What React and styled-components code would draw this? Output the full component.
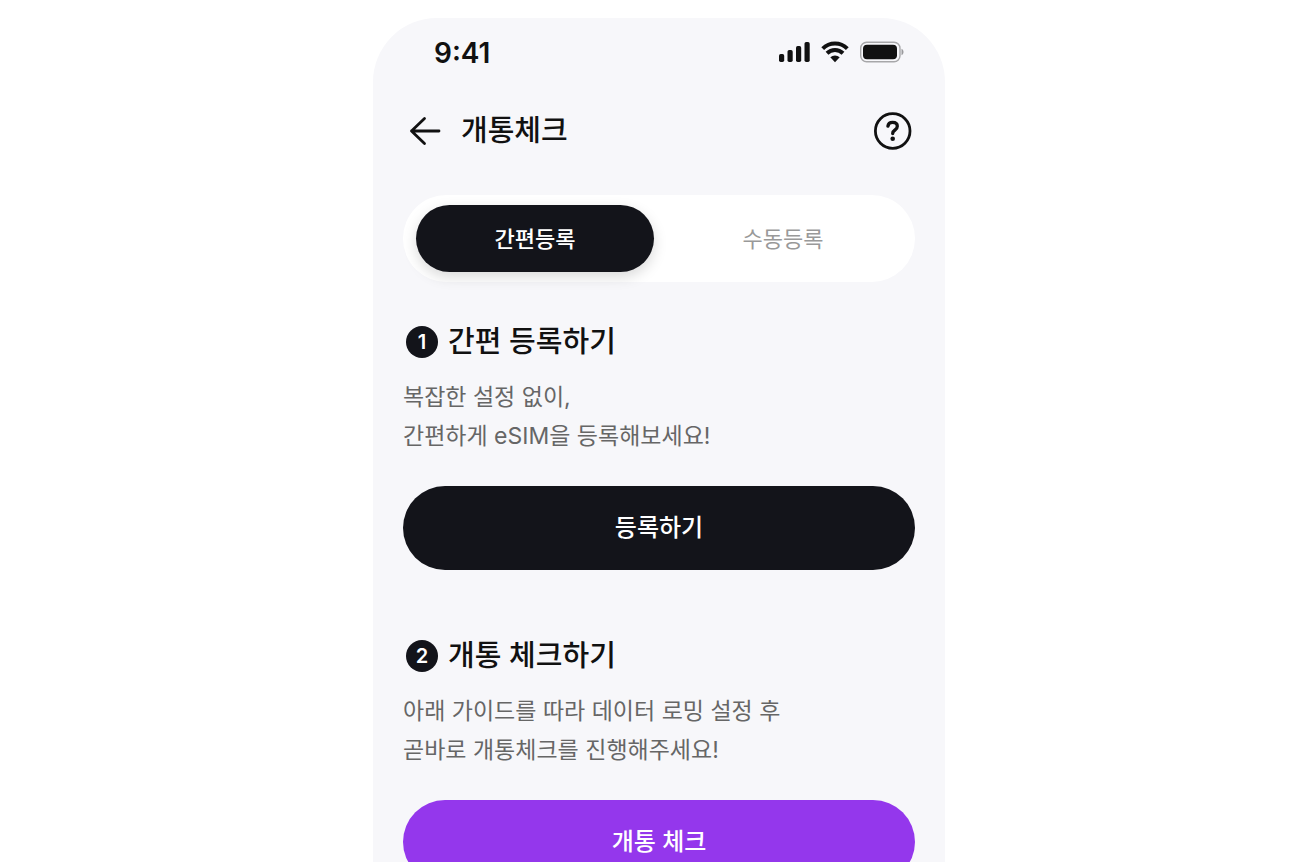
import React, { useState } from 'react';
import styled, { createGlobalStyle, ThemeProvider } from 'styled-components';

const theme = {
    colors: {
        page: '#ffffff',
        screen: '#f7f7fa',
        ink: '#111111',
        dark: '#13141a',
        text: '#666666',
        muted: '#999999',
        purple: '#9437ec',
    },
};

const GlobalStyle = createGlobalStyle`
    html {
        scrollbar-width: none;
    }

    body {
        margin: 0;
        background: ${(props) => props.theme.colors.page};
        color: ${(props) => props.theme.colors.ink};
        font-family: Inter, 'Noto Sans CJK KR', sans-serif;
    }

    *, *::before, *::after {
        box-sizing: border-box;
    }

    button {
        border: 0;
        padding: 0;
        font: inherit;
        cursor: pointer;
    }
`;

const Page = styled.div`
    display: flex;
    justify-content: center;
    padding: 18px 0 0 2px;
`;

const Phone = styled.main`
    width: 100%;
    max-width: 572px;
    padding: 0 30px 60px;
    border-radius: 64px 64px 0 0;
    background: ${(props) => props.theme.colors.screen};
`;

const StatusBar = styled.div`
    display: flex;
    align-items: center;
    justify-content: space-between;
    height: 70px;
    padding: 0 11px 0 31px;
`;

const Time = styled.span`
    font-size: 28px;
    font-weight: 600;
    line-height: 32px;
`;

const StatusIcons = styled.div`
    display: flex;
    align-items: center;
    gap: 11px;
    padding-bottom: 2px;
`;

const Header = styled.header`
    display: flex;
    align-items: center;
    gap: 16px;
    height: 50px;
    margin: 18px 0 39px;
    padding: 0 3px 0 4px;
`;

const IconButton = styled.button`
    display: flex;
    background: none;
    color: ${(props) => props.theme.colors.ink};
`;

const PageTitle = styled.h1`
    flex: 1;
    margin: 0;
    font-size: 29px;
    font-weight: 500;
    line-height: 40px;
`;

const Tabs = styled.div`
    display: grid;
    grid-template-columns: 1fr 1fr;
    gap: 10px;
    padding: 10px 13px;
    border-radius: 44px;
    background: white;
`;

const Tab = styled.button`
    height: 67px;
    border-radius: 34px;
    background: ${(props) => (props.$active ? props.theme.colors.dark : 'transparent')};
    color: ${(props) => (props.$active ? 'white' : props.theme.colors.muted)};
    box-shadow: ${(props) => (props.$active ? '0 5px 14px rgba(0, 0, 0, 0.15)' : 'none')};
    font-size: 22px;
    font-weight: ${(props) => (props.$active ? 500 : 400)};
    line-height: 32px;
`;

const StyledStep = styled.section`
    margin-top: ${(props) => (props.$first ? 40 : 66)}px;
`;

const StepTitle = styled.h2`
    display: flex;
    align-items: center;
    gap: 10px;
    margin: 0 0 16px;
    padding-left: 3px;
    font-size: 29px;
    font-weight: 500;
    line-height: 40px;
`;

const StepNumber = styled.span`
    display: flex;
    align-items: center;
    justify-content: center;
    width: 32px;
    height: 32px;
    border-radius: 50%;
    background: ${(props) => props.theme.colors.dark};
    color: white;
    font-size: 20px;
    font-weight: 600;
    line-height: 32px;
`;

const Description = styled.p`
    margin: 0 0 30px;
    color: ${(props) => props.theme.colors.text};
    font-size: 23px;
    line-height: 39px;
`;

const ActionButton = styled.button`
    display: block;
    width: 100%;
    height: 84px;
    border-radius: 42px;
    background: ${(props) => props.theme.colors[props.$color]};
    color: white;
    font-size: 24px;
    font-weight: 500;
    line-height: 32px;
`;

const SignalIcon = () => (
    <svg width="31" height="22" viewBox="0 0 31 22" fill="#111" aria-hidden="true">
        <rect x="0" y="13" width="5.2" height="8" rx="1.7" />
        <rect x="8.5" y="9" width="5.2" height="12" rx="1.7" />
        <rect x="17" y="5" width="5.2" height="16" rx="1.7" />
        <rect x="25.5" y="1" width="5.2" height="20" rx="1.7" />
    </svg>
);

const WifiIcon = () => (
    <svg width="28" height="22" viewBox="0 0 28 22" aria-hidden="true">
        <path d="M1.7 7.6a17.6 17.6 0 0 1 24.6 0" fill="none" stroke="#111" strokeWidth="4" />
        <path d="M6 12.300a11.500 11.500 0 0 1 16 0" fill="none" stroke="#111" strokeWidth="4" />
        <path d="M14 21.200l-4.700-4.900a7 7 0 0 1 9.400 0z" fill="#111" />
    </svg>
);

const BatteryIcon = () => (
    <svg width="44" height="22" viewBox="0 0 44 22" aria-hidden="true">
        <rect x="0.7" y="1.2" width="39.3" height="19.6" rx="6" fill="none" stroke="#111" strokeOpacity="0.35" strokeWidth="1.4" />
        <rect x="3" y="3.7" width="34" height="14.6" rx="4" fill="#111" />
        <path d="M41.5 7.8c1.2.5 2 1.8 2 3.2s-.8 2.7-2 3.2z" fill="#111" fillOpacity="0.4" />
    </svg>
);

const BackIcon = () => (
    <svg width="38" height="38" viewBox="0 0 38 38" fill="none" stroke="currentColor" strokeWidth="2.8" strokeLinecap="round" strokeLinejoin="round" aria-hidden="true">
        <path d="M32 19H4.500M17.500 6.500L4.500 19l13 12.500" />
    </svg>
);

const HelpIcon = () => (
    <svg width="38" height="38" viewBox="0 0 38 38" fill="none" stroke="currentColor" aria-hidden="true">
        <circle cx="18.700" cy="19" r="17.300" strokeWidth="2.800" />
        <path d="M13.900 14.200c.3-2.400 2-3.800 4.700-3.800 2.800 0 4.700 1.500 4.700 3.900 0 1.800-.9 2.800-2.300 3.700-1.500 1-2.300 1.800-2.300 3.500" strokeWidth="3.300" strokeLinecap="round" />
        <circle cx="18.700" cy="26.700" r="2.300" fill="currentColor" stroke="none" />
    </svg>
);

const steps = [
    {
        title: '간편 등록하기',
        lines: ['복잡한 설정 없이,', '간편하게 eSIM을 등록해보세요!'],
        action: '등록하기',
        color: 'dark',
    },
    {
        title: '개통 체크하기',
        lines: ['아래 가이드를 따라 데이터 로밍 설정 후', '곧바로 개통체크를 진행해주세요!'],
        action: '개통 체크',
        color: 'purple',
    },
];

const tabs = ['간편등록', '수동등록'];

const Step = ({ step, number }) => {
    return (
        <StyledStep $first={number === 1}>
            <StepTitle>
                <StepNumber>{number}</StepNumber>
                {step.title}
            </StepTitle>
            <Description>
                {step.lines[0]}
                <br />
                {step.lines[1]}
            </Description>
            <ActionButton type="button" $color={step.color}>
                {step.action}
            </ActionButton>
        </StyledStep>
    );
};

const App = () => {
    const [activeTab, setActiveTab] = useState(0);

    return (
        <ThemeProvider theme={theme}>
            <GlobalStyle />
            <Page>
                <Phone lang="ko">
                    <StatusBar>
                        <Time>9:41</Time>
                        <StatusIcons>
                            <SignalIcon />
                            <WifiIcon />
                            <BatteryIcon />
                        </StatusIcons>
                    </StatusBar>
                    <Header>
                        <IconButton type="button" aria-label="뒤로">
                            <BackIcon />
                        </IconButton>
                        <PageTitle>개통체크</PageTitle>
                        <IconButton type="button" aria-label="도움말">
                            <HelpIcon />
                        </IconButton>
                    </Header>
                    <Tabs role="tablist">
                        {tabs.map((label, index) => (
                            <Tab
                                key={label}
                                type="button"
                                role="tab"
                                aria-selected={activeTab === index}
                                $active={activeTab === index}
                                onClick={() => setActiveTab(index)}
                            >
                                {label}
                            </Tab>
                        ))}
                    </Tabs>
                    {steps.map((step, index) => (
                        <Step key={step.title} step={step} number={index + 1} />
                    ))}
                </Phone>
            </Page>
        </ThemeProvider>
    );
};

export default App;
